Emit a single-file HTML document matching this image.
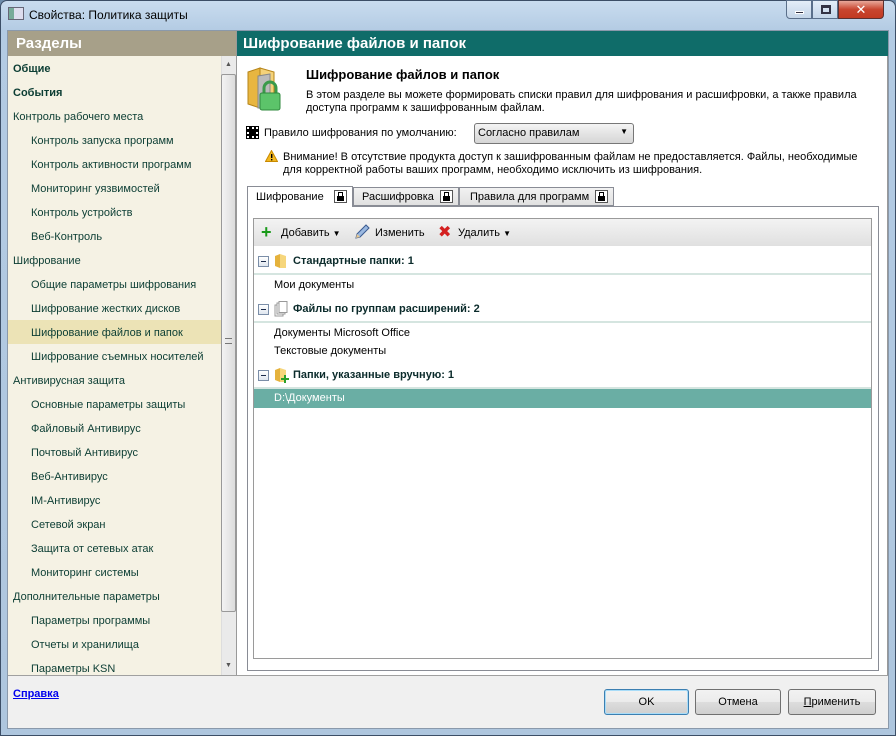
<!DOCTYPE html>
<html><head><meta charset="utf-8"><style>
*{margin:0;padding:0;box-sizing:border-box}
body{width:896px;height:736px;overflow:hidden;font-family:"Liberation Sans","DejaVu Sans",sans-serif;font-size:11px;background:#6d8cab;position:relative}
.a{position:absolute}
#win{left:0;top:0;width:896px;height:736px;border-radius:7px 7px 0 0;background:linear-gradient(#c9dcef,#b3cbe3 30px,#aec6de);border:1px solid #3c4e66}
.side{color:#0b3d33;font-size:11px}
.side div{position:absolute;white-space:nowrap}
.b{font-weight:bold}
.btn{border:1px solid #707070;border-radius:3px;background:linear-gradient(#f2f2f2,#ebebeb 50%,#dddddd 51%,#cfcfcf);text-align:center;line-height:24px;font-size:11px;color:#000}
.grp{font-weight:bold;color:#0b2b2b}
.tb{font-size:11px;color:#000;white-space:nowrap}
.lock{display:inline-block;width:13px;height:13px;border:1px solid #555;background:#fff;position:relative;vertical-align:middle}
.lock:after{content:"";position:absolute;left:2px;top:5px;width:7px;height:5px;background:#000}
.lock:before{content:"";position:absolute;left:3px;top:1px;width:3px;height:4px;border:1px solid #000;border-bottom:none}
.minus{width:11px;height:11px;border:1px solid #7b8ea8;background:linear-gradient(#fff,#dfe6ef);}
.minus:after{content:"";position:absolute;left:2px;top:4px;width:5px;height:1px;background:#1b2b4b}
</style></head><body>
<div id="win" class="a"></div>
<div class="a" style="left:8px;top:7px;width:16px;height:13px;background:linear-gradient(90deg,#7a9 0,#7a9 5px,#dde 5px);border:1px solid #667"></div>
<div class="a" style="left:29px;top:8px;font-size:12px;color:#000">Свойства: Политика защиты</div>
<div class="a" style="left:786px;top:0;width:26px;height:19px;border:1px solid #5a6f8a;border-radius:0 0 0 4px;background:linear-gradient(#e4eef8,#c3d5e8)"><div class="a" style="left:8px;top:10px;width:9px;height:3px;background:#334;border:1px solid #fff"></div></div>
<div class="a" style="left:812px;top:0;width:26px;height:19px;border:1px solid #5a6f8a;background:linear-gradient(#e4eef8,#c3d5e8)"><div class="a" style="left:8px;top:4px;width:10px;height:9px;border:2px solid #334;border-top-width:3px"></div></div>
<div class="a" style="left:838px;top:0;width:46px;height:19px;border:1px solid #5a3030;border-radius:0 0 4px 0;background:linear-gradient(#e8a89a,#c8452f 50%,#c23a22);color:#fff;font-weight:bold;font-size:13px;text-align:center;line-height:18px">✕</div>
<div class="a" style="left:7px;top:30px;width:882px;height:699px;background:#f0f0f0;border:1px solid #8a99ab"></div>
<div class="a" style="left:8px;top:31px;width:229px;height:25px;background:#a7a089;color:#fff;font-size:15px;font-weight:bold;padding:4px 0 0 8px">Разделы</div>
<div class="a" style="left:8px;top:56px;width:213px;height:619px;background:#f5f2e4"></div>
<div class="a" style="left:8px;top:320px;width:213px;height:24px;background:#ece3b6"></div>
<div class="a side" style="left:0;top:1px">
<div class="b" style="left:13px;top:62px">Общие</div>
<div class="b" style="left:13px;top:86px">События</div>
<div style="left:13px;top:110px">Контроль рабочего места</div>
<div style="left:31px;top:134px">Контроль запуска программ</div>
<div style="left:31px;top:158px">Контроль активности программ</div>
<div style="left:31px;top:182px">Мониторинг уязвимостей</div>
<div style="left:31px;top:206px">Контроль устройств</div>
<div style="left:31px;top:230px">Веб-Контроль</div>
<div style="left:13px;top:254px">Шифрование</div>
<div style="left:31px;top:278px">Общие параметры шифрования</div>
<div style="left:31px;top:302px">Шифрование жестких дисков</div>
<div style="left:31px;top:326px">Шифрование файлов и папок</div>
<div style="left:31px;top:350px">Шифрование съемных носителей</div>
<div style="left:13px;top:374px">Антивирусная защита</div>
<div style="left:31px;top:398px">Основные параметры защиты</div>
<div style="left:31px;top:422px">Файловый Антивирус</div>
<div style="left:31px;top:446px">Почтовый Антивирус</div>
<div style="left:31px;top:470px">Веб-Антивирус</div>
<div style="left:31px;top:494px">IM-Антивирус</div>
<div style="left:31px;top:518px">Сетевой экран</div>
<div style="left:31px;top:542px">Защита от сетевых атак</div>
<div style="left:31px;top:566px">Мониторинг системы</div>
<div style="left:13px;top:590px">Дополнительные параметры</div>
<div style="left:31px;top:614px">Параметры программы</div>
<div style="left:31px;top:638px">Отчеты и хранилища</div>
<div style="left:31px;top:662px;height:12px;overflow:hidden">Параметры KSN</div>
</div>
<div class="a" style="left:221px;top:56px;width:15px;height:619px;background:#eaeaea;border-left:1px solid #ddd"></div>
<div class="a" style="left:225px;top:61px;font-size:7px;color:#555">▲</div>
<div class="a" style="left:225px;top:662px;font-size:7px;color:#555">▼</div>
<div class="a" style="left:221px;top:74px;width:15px;height:538px;border:1px solid #999;border-radius:2px;background:linear-gradient(90deg,#f3f3f3,#dcdcdc)"></div>
<div class="a" style="left:225px;top:338px;width:7px;height:6px;border-top:1px solid #777;border-bottom:1px solid #777"></div>
<div class="a" style="left:236px;top:31px;width:1px;height:644px;background:#999"></div>
<div class="a" style="left:237px;top:31px;width:651px;height:25px;background:#0f6c69;color:#fff;font-size:15px;font-weight:bold;padding:4px 0 0 6px">Шифрование файлов и папок</div>
<div class="a" style="left:237px;top:56px;width:651px;height:619px;background:#fff;border-right:1px solid #999"></div>
<svg class="a" style="left:244px;top:64px" width="46" height="50" viewBox="0 0 46 50">
<path d="M4 8 L16 4 L16 44 L4 40Z" fill="#e8b640" stroke="#b68418"/>
<path d="M16 4 L30 8 L30 44 L16 44Z" fill="#f4d27a" stroke="#b68418"/>
<path d="M14 12 L26 10 L26 44 L14 44Z" fill="#bbb" stroke="#888"/>
<path d="M20 30 v-6 a6 6 0 0 1 12 0 v6" fill="none" stroke="#3a9a4a" stroke-width="3"/>
<rect x="16" y="29" width="20" height="17" rx="2" fill="#5cc46a" stroke="#2f8a3e"/>
</svg>
<div class="a" style="left:306px;top:67px;font-size:13px;font-weight:bold;color:#000">Шифрование файлов и папок</div>
<div class="a" style="left:306px;top:89px;width:570px;font-size:11px;line-height:13px;color:#000">В этом разделе вы можете формировать списки правил для шифрования и расшифровки, а также правила доступа программ к зашифрованным файлам.</div>
<div class="a" style="left:247px;top:127px;width:11px;height:11px;background:#000;border:2px dotted #fff;outline:1px solid #000"></div>
<div class="a" style="left:264px;top:127px;color:#000">Правило шифрования по умолчанию:</div>
<div class="a" style="left:474px;top:123px;width:160px;height:21px;border:1px solid #777;border-radius:3px;background:linear-gradient(#f4f4f4,#e4e4e4 50%,#d6d6d6);padding:3px 0 0 3px;color:#000">Согласно правилам<span style="position:absolute;right:5px;top:3px;font-size:8px">▼</span></div>
<svg class="a" style="left:265px;top:150px" width="13" height="12"><path d="M6.5 0.5 L12.5 11.5 L0.5 11.5Z" fill="#f3b820" stroke="#c98a00"/><rect x="6" y="4" width="1.4" height="4" fill="#000"/><rect x="6" y="9" width="1.4" height="1.4" fill="#000"/></svg>
<div class="a" style="left:283px;top:151px;width:590px;line-height:13px;color:#000">Внимание! В отсутствие продукта доступ к зашифрованным файлам не предоставляется. Файлы, необходимые для корректной работы ваших программ, необходимо исключить из шифрования.</div>
<div class="a" style="left:247px;top:206px;width:632px;height:465px;border:1px solid #898c95;background:#fff"></div>
<div class="a tb" style="left:247px;top:186px;width:106px;height:21px;background:#fff;border:1px solid #898c95;border-bottom:none;padding:4px 0 0 8px">Шифрование <span class="lock" style="position:absolute;left:86px;top:3px"></span></div>
<div class="a tb" style="left:353px;top:187px;width:106px;height:19px;background:linear-gradient(#f2f2f2,#e0e0e0);border:1px solid #898c95;padding:3px 0 0 8px">Расшифровка <span class="lock" style="position:absolute;left:86px;top:2px"></span></div>
<div class="a tb" style="left:459px;top:187px;width:155px;height:19px;background:linear-gradient(#f2f2f2,#e0e0e0);border:1px solid #898c95;padding:3px 0 0 10px">Правила для программ <span class="lock" style="position:absolute;left:135px;top:2px"></span></div>
<div class="a" style="left:253px;top:218px;width:619px;height:441px;border:1px solid #9a9a9a;background:#fff"></div>
<div class="a" style="left:254px;top:219px;width:617px;height:27px;background:linear-gradient(#f3f3f3,#e0e0e0)"></div>
<div class="a" style="left:261px;top:225px;color:#1a9a1a;font-size:18px;font-weight:bold;line-height:14px">+</div>
<div class="a" style="left:281px;top:227px;color:#000">Добавить <span style="font-size:8px">▼</span></div>
<svg class="a" style="left:354px;top:224px" width="16" height="16"><path d="M2 14 L3 10 L12 1 L15 4 L6 13Z" fill="#9ab8e0" stroke="#3a5a90"/><path d="M2 14 L3 10 L6 13Z" fill="#e8c890"/></svg>
<div class="a" style="left:375px;top:227px;color:#000">Изменить</div>
<div class="a" style="left:438px;top:222px;color:#d42020;font-size:16px;font-weight:bold">✖</div>
<div class="a" style="left:458px;top:227px;color:#000">Удалить <span style="font-size:8px">▼</span></div>
<div class="a minus" style="left:258px;top:256px"></div>
<svg class="a" style="left:274px;top:253px" width="14" height="16"><path d="M1 3 L6 1 L6 15 L1 13Z" fill="#e5b23c"/><path d="M6 1 L12 3 L12 15 L6 15Z" fill="#f6d67c"/></svg>
<div class="a grp" style="left:293px;top:255px">Стандартные папки: 1</div>
<div class="a" style="left:254px;top:273px;width:617px;height:2px;background:#d5e5e0"></div>
<div class="a" style="left:274px;top:279px;color:#000">Мои документы</div>
<div class="a minus" style="left:258px;top:304px"></div>
<svg class="a" style="left:274px;top:301px" width="14" height="16"><rect x="1" y="4" width="8" height="11" fill="#fff" stroke="#999"/><rect x="3" y="2" width="8" height="11" fill="#fff" stroke="#999"/><rect x="5" y="0.5" width="8" height="11" fill="#fff" stroke="#999"/></svg>
<div class="a grp" style="left:293px;top:303px">Файлы по группам расширений: 2</div>
<div class="a" style="left:254px;top:321px;width:617px;height:2px;background:#d5e5e0"></div>
<div class="a" style="left:274px;top:327px;color:#000">Документы Microsoft Office</div>
<div class="a" style="left:274px;top:345px;color:#000">Текстовые документы</div>
<div class="a minus" style="left:258px;top:370px"></div>
<svg class="a" style="left:274px;top:367px" width="16" height="17"><path d="M1 3 L6 1 L6 15 L1 13Z" fill="#e5b23c"/><path d="M6 1 L12 3 L12 15 L6 15Z" fill="#f6d67c"/><path d="M10 8h2v3h3v2h-3v3h-2v-3h-3v-2h3z" fill="#2aa02a"/></svg>
<div class="a grp" style="left:293px;top:369px">Папки, указанные вручную: 1</div>
<div class="a" style="left:254px;top:387px;width:617px;height:2px;background:#d5e5e0"></div>
<div class="a" style="left:254px;top:389px;width:617px;height:19px;background:#6aaea4;color:#fff;padding:3px 0 0 20px">D:\Документы</div>
<div class="a" style="left:8px;top:675px;width:880px;height:1px;background:#a0a0a0"></div>
<div class="a" style="left:13px;top:688px;color:#0000ee;font-weight:bold;text-decoration:underline;font-size:11px">Справка</div>
<div class="a btn" style="left:604px;top:689px;width:85px;height:26px;border-color:#3c7fb1;box-shadow:inset 0 0 0 1px #a8dcf8">OK</div>
<div class="a btn" style="left:695px;top:689px;width:86px;height:26px">Отмена</div>
<div class="a btn" style="left:788px;top:689px;width:88px;height:26px"><u>П</u>рименить</div>
</body></html>
